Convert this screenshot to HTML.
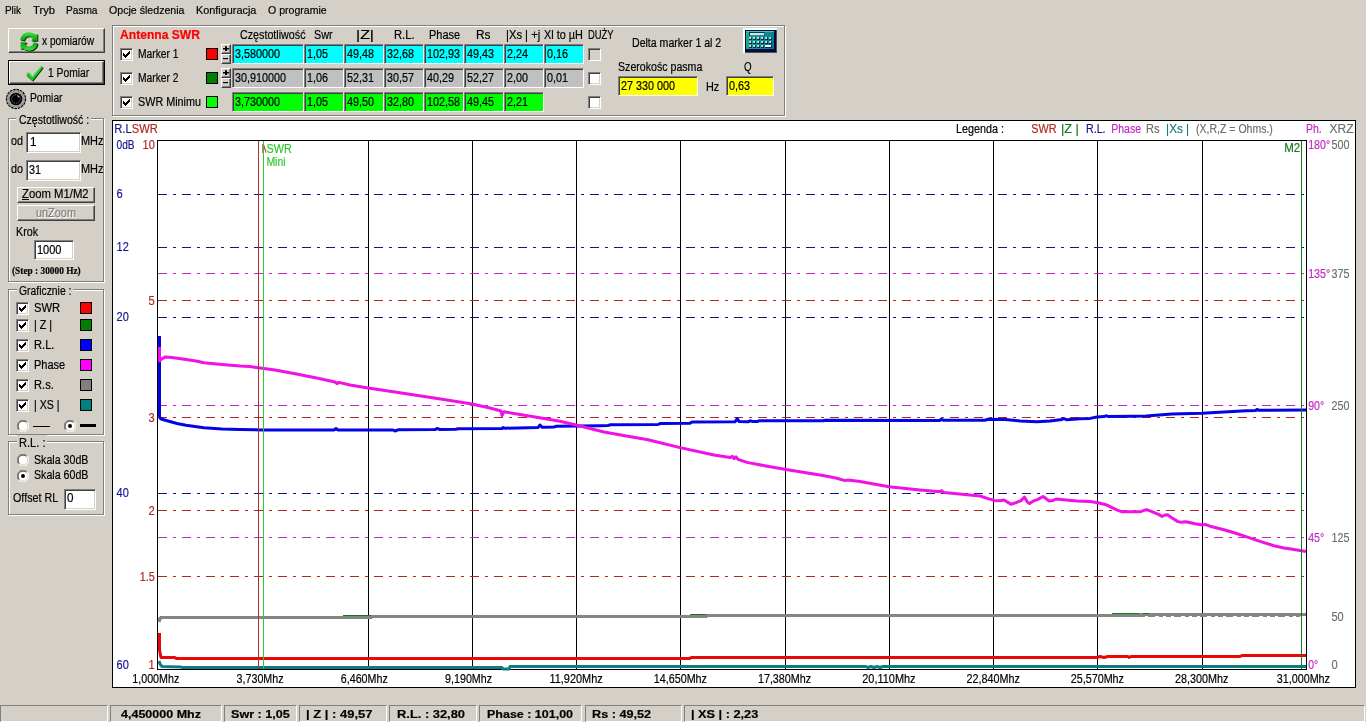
<!DOCTYPE html>
<html lang="pl"><head><meta charset="utf-8"><title>Antenna SWR</title>
<style>
html,body{margin:0;padding:0}
body{width:1366px;height:722px;overflow:hidden;background:#d4d0c8;position:relative;font-family:"Liberation Sans",sans-serif;font-size:12.5px;color:#000}
.a,.t{position:absolute}
.t{-webkit-text-stroke:.2px;white-space:nowrap;line-height:16px;height:16px;transform-origin:0 50%}
.btn{position:absolute;box-sizing:border-box;background:#d4d0c8;border:1px solid;border-color:#fff #404040 #404040 #fff;box-shadow:inset -1px -1px 0 #808080,inset 1px 1px 0 #d4d0c8}
.sunk{position:absolute;box-sizing:border-box;border:1px solid;border-color:#808080 #fff #fff #808080;box-shadow:inset 1px 1px 0 #404040,inset -1px -1px 0 #d4d0c8;background:#fff}
.fld{position:absolute;box-sizing:border-box;border:1px solid;border-color:#808080 #fff #fff #808080;box-shadow:inset 1px 1px 0 #404040}
.grp{position:absolute;box-sizing:border-box;border:1px solid #808080;box-shadow:1px 1px 0 #fff,inset 1px 1px 0 #fff}
.cap{position:absolute;background:#d4d0c8;height:14px}
.cb{position:absolute;box-sizing:border-box;width:13px;height:13px;border:1px solid;border-color:#808080 #fff #fff #808080;box-shadow:inset 1px 1px 0 #404040,inset -1px -1px 0 #d4d0c8;background:#fff}
.cb svg{position:absolute;left:2px;top:2px}
.sw{position:absolute;box-sizing:border-box;width:12px;height:12px;border:1px solid #000}
.rd{position:absolute;width:12px;height:12px}
.sp{position:absolute;box-sizing:border-box;background:#d4d0c8;border:1px solid;border-color:#fff #404040 #404040 #fff;box-shadow:inset -1px -1px 0 #808080}
.stp{position:absolute;box-sizing:border-box;top:705px;height:17px;border:1px solid;border-color:#808080 #fff #fff #808080}
#app{position:absolute;left:0;top:0;width:1366px;height:722px;will-change:transform}
svg text{stroke-width:.18px}

</style></head>
<body>
<div id="app">
<div class="a" id="menubar" style="left:0;top:0;width:1366px;height:20px">
<span class="t" style="left:5.1px;top:2.0px;font-size:11.5px;transform:scaleX(0.863);">Plik</span>
<span class="t" style="left:32.6px;top:2.0px;font-size:11.5px;transform:scaleX(0.974);">Tryb</span>
<span class="t" style="left:66.1px;top:2.0px;font-size:11.5px;transform:scaleX(0.880);">Pasma</span>
<span class="t" style="left:109.1px;top:2.0px;font-size:11.5px;transform:scaleX(0.923);">Opcje śledzenia</span>
<span class="t" style="left:196.2px;top:2.0px;font-size:11.5px;transform:scaleX(0.945);">Konfiguracja</span>
<span class="t" style="left:268.4px;top:2.0px;font-size:11.5px;transform:scaleX(0.918);">O programie</span>
</div>
<div class="btn" id="btn-xpom" style="left:8px;top:28px;width:97px;height:25px"><svg class="a" style="left:10.5px;top:2.5px" width="19" height="20" viewBox="0 0 19 20"><defs><linearGradient id="gg" x1="0" y1="0" x2="0" y2="1"><stop offset="0" stop-color="#3fe63f"/><stop offset="0.5" stop-color="#1fc01f"/><stop offset="1" stop-color="#109a14"/></linearGradient></defs><g><path d="M0.4 8.0 C0.7 3.3 4.6 0.3 8.9 0.3 C11.3 0.3 13.2 1.1 14.8 2.5 L17.4 1.7 L17.4 8.8 L11.2 8.8 L12.9 6.6 C11.9 5.0 10.4 4.4 8.9 4.4 C6.7 4.4 4.9 5.8 4.3 8.5 Z" transform="translate(0.9,0.9)" fill="#04300a"/><path d="M0.4 8.0 C0.7 3.3 4.6 0.3 8.9 0.3 C11.3 0.3 13.2 1.1 14.8 2.5 L17.4 1.7 L17.4 8.8 L11.2 8.8 L12.9 6.6 C11.9 5.0 10.4 4.4 8.9 4.4 C6.7 4.4 4.9 5.8 4.3 8.5 Z" fill="url(#gg)"/><g transform="rotate(180 9 9.5)"><path d="M0.4 8.0 C0.7 3.3 4.6 0.3 8.9 0.3 C11.3 0.3 13.2 1.1 14.8 2.5 L17.4 1.7 L17.4 8.8 L11.2 8.8 L12.9 6.6 C11.9 5.0 10.4 4.4 8.9 4.4 C6.7 4.4 4.9 5.8 4.3 8.5 Z" transform="translate(-0.9,-0.9)" fill="#04300a"/><path d="M0.4 8.0 C0.7 3.3 4.6 0.3 8.9 0.3 C11.3 0.3 13.2 1.1 14.8 2.5 L17.4 1.7 L17.4 8.8 L11.2 8.8 L12.9 6.6 C11.9 5.0 10.4 4.4 8.9 4.4 C6.7 4.4 4.9 5.8 4.3 8.5 Z" fill="url(#gg)"/></g></g></svg><span class="t" style="left:33.0px;top:3.7px;font-size:12.5px;transform:scaleX(0.814);">x pomiarów</span></div>
<div class="a" id="btn-1pom-frame" style="left:8px;top:60px;width:97px;height:25px;background:#000"><div class="btn" style="left:1px;top:1px;width:95px;height:23px"><svg class="a" style="left:15px;top:2px" width="20" height="19" viewBox="24 63 20 19"><path d="M25.8 72.2 L27.8 71.2 L31.2 75.2 L40.2 64.8 L42 66.4 L31.4 80 L25.6 74.6 Z" transform="translate(0.7,0.8)" fill="#052e0c"/><path d="M25.8 72.2 L27.8 71.2 L31.2 75.2 L40.2 64.8 L42 66.4 L31.4 80 L25.6 74.6 Z" fill="#1fc01f"/><path d="M26.6 72.4 L27.8 71.8 L31.2 76 L40.2 65.6" fill="none" stroke="#62f462" stroke-width="1"/></svg><span class="t" style="left:37.5px;top:2.6px;font-size:12.5px;transform:scaleX(0.824);">1 Pomiar</span></div></div>
<svg class="a" id="ico-pomiar" style="left:5px;top:88px" width="22" height="22" viewBox="0 0 22 22"><circle cx="11" cy="11" r="9.6" fill="#a2a2a2" stroke="#000" stroke-width="1.1" stroke-dasharray="2.6 0.9"/><circle cx="11" cy="11" r="8.2" fill="none" stroke="#3a3a3a" stroke-width="0.7" stroke-dasharray="1 4.1"/><circle cx="11" cy="11" r="6.3" fill="#000"/><circle cx="11" cy="11" r="4.3" fill="none" stroke="#8a8a8a" stroke-width="0.8" stroke-dasharray="1.6 1"/><ellipse cx="13.4" cy="8.6" rx="1.4" ry="0.6" transform="rotate(45 13.4 8.6)" fill="#c8c8c8"/></svg>
<span class="t" style="left:30.0px;top:90.4px;font-size:12.5px;transform:scaleX(0.821);">Pomiar</span>
<div class="grp" id="panel-markers" style="left:112px;top:25px;width:673px;height:91px">
<span class="t" style="left:6.6px;top:0.8px;font-size:12.5px;font-weight:bold;color:#ff0000;transform:scaleX(0.968);">Antenna SWR</span>
<span class="t" style="left:126.5px;top:0.5px;font-size:12.5px;transform:scaleX(0.857);">Częstotliwość</span>
<span class="t" style="left:200.9px;top:0.5px;font-size:12.5px;transform:scaleX(0.864);">Swr</span>
<span class="t" style="left:243.0px;top:0.5px;font-size:12.5px;transform:scaleX(1.274);">|Z|</span>
<span class="t" style="left:280.9px;top:0.5px;font-size:12.5px;transform:scaleX(0.899);">R.L.</span>
<span class="t" style="left:315.9px;top:0.5px;font-size:12.5px;transform:scaleX(0.878);">Phase</span>
<span class="t" style="left:363.0px;top:0.5px;font-size:12.5px;transform:scaleX(0.949);">Rs</span>
<span class="t" style="left:392.9px;top:0.5px;font-size:12.5px;transform:scaleX(0.897);">|Xs | +j</span>
<span class="t" style="left:431.1px;top:0.5px;font-size:12.5px;transform:scaleX(0.870);">Xl to µH</span>
<span class="t" style="left:474.9px;top:0.5px;font-size:12.5px;transform:scaleX(0.752);">DUŻY</span>
<div class="cb" style="left:7px;top:22px;background:#fff"><svg width="7" height="7" viewBox="0 0 7 7" shape-rendering="crispEdges"><path d="M0 2h1v3h-1zM1 3h1v3h-1zM2 4h1v3h-1zM3 3h1v3h-1zM4 2h1v3h-1zM5 1h1v3h-1zM6 0h1v3h-1z" fill="#000"/></svg></div>
<span class="t" style="left:25.2px;top:20.0px;font-size:12.5px;transform:scaleX(0.821);">Marker 1</span>
<div class="sw" style="left:93px;top:22px;background:#ff0000"></div>
<div class="sp" style="left:108px;top:18px;width:10px;height:10px"><svg class="a" style="left:0;top:0" width="8" height="8"><path d="M1 3h6v1.4h-6zM3 1.2h2v4.8h-2z" fill="#000"/></svg></div>
<div class="sp" style="left:108px;top:28px;width:10px;height:10px"><svg class="a" style="left:0;top:0" width="8" height="8"><path d="M1 3h5v1.2h-5z" fill="#000"/></svg></div>
<div class="fld" style="left:119px;top:18px;width:72px;height:20px;background:#00ffff"><span class="t" style="left:2.4px;top:1.0px;font-size:12.5px;transform:scaleX(0.863);">3,580000</span></div>
<div class="fld" style="left:191px;top:18px;width:40px;height:20px;background:#00ffff"><span class="t" style="left:2.4px;top:1.0px;font-size:12.5px;transform:scaleX(0.863);">1,05</span></div>
<div class="fld" style="left:231px;top:18px;width:40px;height:20px;background:#00ffff"><span class="t" style="left:2.4px;top:1.0px;font-size:12.5px;transform:scaleX(0.863);">49,48</span></div>
<div class="fld" style="left:271px;top:18px;width:40px;height:20px;background:#00ffff"><span class="t" style="left:2.4px;top:1.0px;font-size:12.5px;transform:scaleX(0.863);">32,68</span></div>
<div class="fld" style="left:311px;top:18px;width:40px;height:20px;background:#00ffff"><span class="t" style="left:2.4px;top:1.0px;font-size:12.5px;transform:scaleX(0.863);">102,93</span></div>
<div class="fld" style="left:351px;top:18px;width:40px;height:20px;background:#00ffff"><span class="t" style="left:2.4px;top:1.0px;font-size:12.5px;transform:scaleX(0.863);">49,43</span></div>
<div class="fld" style="left:391px;top:18px;width:40px;height:20px;background:#00ffff"><span class="t" style="left:2.4px;top:1.0px;font-size:12.5px;transform:scaleX(0.863);">2,24</span></div>
<div class="fld" style="left:431px;top:18px;width:40px;height:20px;background:#00ffff"><span class="t" style="left:2.4px;top:1.0px;font-size:12.5px;transform:scaleX(0.863);">0,16</span></div>
<div class="cb" style="left:475px;top:22px;background:#d4d0c8"></div>
<div class="cb" style="left:7px;top:46px;background:#fff"><svg width="7" height="7" viewBox="0 0 7 7" shape-rendering="crispEdges"><path d="M0 2h1v3h-1zM1 3h1v3h-1zM2 4h1v3h-1zM3 3h1v3h-1zM4 2h1v3h-1zM5 1h1v3h-1zM6 0h1v3h-1z" fill="#000"/></svg></div>
<span class="t" style="left:25.2px;top:44.0px;font-size:12.5px;transform:scaleX(0.821);">Marker 2</span>
<div class="sw" style="left:93px;top:46px;background:#008000"></div>
<div class="sp" style="left:108px;top:42px;width:10px;height:10px"><svg class="a" style="left:0;top:0" width="8" height="8"><path d="M1 3h6v1.4h-6zM3 1.2h2v4.8h-2z" fill="#000"/></svg></div>
<div class="sp" style="left:108px;top:52px;width:10px;height:10px"><svg class="a" style="left:0;top:0" width="8" height="8"><path d="M1 3h5v1.2h-5z" fill="#000"/></svg></div>
<div class="fld" style="left:119px;top:42px;width:72px;height:20px;background:#c0c0c0"><span class="t" style="left:2.4px;top:1.0px;font-size:12.5px;transform:scaleX(0.863);">30,910000</span></div>
<div class="fld" style="left:191px;top:42px;width:40px;height:20px;background:#c0c0c0"><span class="t" style="left:2.4px;top:1.0px;font-size:12.5px;transform:scaleX(0.863);">1,06</span></div>
<div class="fld" style="left:231px;top:42px;width:40px;height:20px;background:#c0c0c0"><span class="t" style="left:2.4px;top:1.0px;font-size:12.5px;transform:scaleX(0.863);">52,31</span></div>
<div class="fld" style="left:271px;top:42px;width:40px;height:20px;background:#c0c0c0"><span class="t" style="left:2.4px;top:1.0px;font-size:12.5px;transform:scaleX(0.863);">30,57</span></div>
<div class="fld" style="left:311px;top:42px;width:40px;height:20px;background:#c0c0c0"><span class="t" style="left:2.4px;top:1.0px;font-size:12.5px;transform:scaleX(0.863);">40,29</span></div>
<div class="fld" style="left:351px;top:42px;width:40px;height:20px;background:#c0c0c0"><span class="t" style="left:2.4px;top:1.0px;font-size:12.5px;transform:scaleX(0.863);">52,27</span></div>
<div class="fld" style="left:391px;top:42px;width:40px;height:20px;background:#c0c0c0"><span class="t" style="left:2.4px;top:1.0px;font-size:12.5px;transform:scaleX(0.863);">2,00</span></div>
<div class="fld" style="left:431px;top:42px;width:40px;height:20px;background:#c0c0c0"><span class="t" style="left:2.4px;top:1.0px;font-size:12.5px;transform:scaleX(0.863);">0,01</span></div>
<div class="cb" style="left:475px;top:46px;background:#fff"></div>
<div class="cb" style="left:7px;top:70px;background:#fff"><svg width="7" height="7" viewBox="0 0 7 7" shape-rendering="crispEdges"><path d="M0 2h1v3h-1zM1 3h1v3h-1zM2 4h1v3h-1zM3 3h1v3h-1zM4 2h1v3h-1zM5 1h1v3h-1zM6 0h1v3h-1z" fill="#000"/></svg></div>
<span class="t" style="left:25.2px;top:68.0px;font-size:12.5px;transform:scaleX(0.864);">SWR Minimu</span>
<div class="sw" style="left:93px;top:70px;background:#00ff00"></div>
<div class="fld" style="left:119px;top:66px;width:72px;height:20px;background:#00ff00"><span class="t" style="left:2.4px;top:1.0px;font-size:12.5px;transform:scaleX(0.863);">3,730000</span></div>
<div class="fld" style="left:191px;top:66px;width:40px;height:20px;background:#00ff00"><span class="t" style="left:2.4px;top:1.0px;font-size:12.5px;transform:scaleX(0.863);">1,05</span></div>
<div class="fld" style="left:231px;top:66px;width:40px;height:20px;background:#00ff00"><span class="t" style="left:2.4px;top:1.0px;font-size:12.5px;transform:scaleX(0.863);">49,50</span></div>
<div class="fld" style="left:271px;top:66px;width:40px;height:20px;background:#00ff00"><span class="t" style="left:2.4px;top:1.0px;font-size:12.5px;transform:scaleX(0.863);">32,80</span></div>
<div class="fld" style="left:311px;top:66px;width:40px;height:20px;background:#00ff00"><span class="t" style="left:2.4px;top:1.0px;font-size:12.5px;transform:scaleX(0.863);">102,58</span></div>
<div class="fld" style="left:351px;top:66px;width:40px;height:20px;background:#00ff00"><span class="t" style="left:2.4px;top:1.0px;font-size:12.5px;transform:scaleX(0.863);">49,45</span></div>
<div class="fld" style="left:391px;top:66px;width:40px;height:20px;background:#00ff00"><span class="t" style="left:2.4px;top:1.0px;font-size:12.5px;transform:scaleX(0.863);">2,21</span></div>
<div class="cb" style="left:475px;top:70px;background:#fff"></div>
<span class="t" style="left:519.2px;top:9.0px;font-size:12.5px;transform:scaleX(0.845);">Delta marker 1 al 2</span>
<span class="t" style="left:505.2px;top:33.0px;font-size:12.5px;transform:scaleX(0.849);">Szerokośc pasma</span>
<div class="fld" style="left:505px;top:50px;width:80px;height:20px;background:#ffff00"><span class="t" style="left:2.2px;top:1.0px;font-size:12.5px;transform:scaleX(0.863);">27 330 000</span></div>
<span class="t" style="left:593.4px;top:53.0px;font-size:12.5px;transform:scaleX(0.871);">Hz</span>
<span class="t" style="left:631.2px;top:33.0px;font-size:12.5px;transform:scaleX(0.782);">Q</span>
<div class="fld" style="left:613px;top:50px;width:48px;height:20px;background:#ffff00"><span class="t" style="left:2.4px;top:1.0px;font-size:12.5px;transform:scaleX(0.863);">0,63</span></div>
<div class="a" id="btn-calc" style="left:630px;top:2px;width:34px;height:25px"><svg class="a" style="left:0;top:0" width="34" height="25" viewBox="743 28 34 25"><defs><linearGradient id="tg" x1="0" y1="0" x2="1" y2="0.4"><stop offset="0" stop-color="#22b090"/><stop offset="0.5" stop-color="#159a94"/><stop offset="1" stop-color="#0e7890"/></linearGradient></defs><rect x="743" y="28" width="34" height="25" fill="#fff"/><rect x="745" y="30" width="32" height="23" fill="#505050"/><rect x="745" y="30" width="31" height="22" fill="#08083a"/><rect x="746" y="31" width="28" height="18" fill="url(#tg)"/><rect x="746" y="31" width="28" height="1" fill="#58ccc0" opacity="0.8"/><rect x="749" y="32" width="15.5" height="4" fill="#0a3a4a"/><rect x="750" y="33" width="14" height="2.4" fill="#b4f2f2"/><rect x="749" y="37" width="3" height="3" fill="#062a40"/><rect x="749.2" y="37" width="1.9" height="1.9" fill="#c8fafa"/><rect x="753" y="37" width="3" height="3" fill="#062a40"/><rect x="753.2" y="37" width="1.9" height="1.9" fill="#c8fafa"/><rect x="757" y="37" width="3" height="3" fill="#062a40"/><rect x="757.2" y="37" width="1.9" height="1.9" fill="#c8fafa"/><rect x="761" y="37" width="3" height="3" fill="#062a40"/><rect x="761.2" y="37" width="1.9" height="1.9" fill="#c8fafa"/><rect x="765" y="37" width="3" height="3" fill="#062a40"/><rect x="765.2" y="37" width="1.9" height="1.9" fill="#c8fafa"/><rect x="769" y="37" width="3" height="3" fill="#062a40"/><rect x="769.2" y="37" width="1.9" height="1.9" fill="#c8fafa"/><rect x="749" y="41" width="3" height="3" fill="#062a40"/><rect x="749.2" y="41" width="1.9" height="1.9" fill="#c8fafa"/><rect x="753" y="41" width="3" height="3" fill="#062a40"/><rect x="753.2" y="41" width="1.9" height="1.9" fill="#c8fafa"/><rect x="757" y="41" width="3" height="3" fill="#062a40"/><rect x="757.2" y="41" width="1.9" height="1.9" fill="#c8fafa"/><rect x="761" y="41" width="3" height="3" fill="#062a40"/><rect x="761.2" y="41" width="1.9" height="1.9" fill="#c8fafa"/><rect x="765" y="41" width="3" height="3" fill="#062a40"/><rect x="765.2" y="41" width="1.9" height="1.9" fill="#c8fafa"/><rect x="769" y="41" width="3" height="3" fill="#062a40"/><rect x="769.2" y="41" width="1.9" height="1.9" fill="#c8fafa"/><rect x="749" y="45" width="3" height="3" fill="#062a40"/><rect x="749.2" y="45" width="1.9" height="1.9" fill="#c8fafa"/><rect x="753" y="45" width="3" height="3" fill="#062a40"/><rect x="753.2" y="45" width="1.9" height="1.9" fill="#c8fafa"/><rect x="757" y="45" width="3" height="3" fill="#062a40"/><rect x="757.2" y="45" width="1.9" height="1.9" fill="#c8fafa"/><rect x="761" y="45" width="3" height="3" fill="#062a40"/><rect x="761.2" y="45" width="1.9" height="1.9" fill="#c8fafa"/><rect x="765" y="45" width="7" height="3" fill="#062a40"/><rect x="765" y="45" width="6" height="2" fill="#f2ffff"/></svg></div>
</div>
<div class="grp" id="grp-freq" style="left:8px;top:118px;width:96px;height:164px"></div><div class="cap" style="left:16.4px;top:112px;width:74.2px"></div><span class="t" style="left:18.9px;top:112.0px;font-size:12.5px;transform:scaleX(0.842);">Częstotliwość :</span>
<span class="t" style="left:10.5px;top:133.0px;font-size:12.5px;transform:scaleX(0.863);">od</span>
<div class="sunk" style="left:26px;top:132px;width:55px;height:21px"><span class="t" style="left:2.5px;top:1.0px;font-size:12.5px;transform:scaleX(0.935);">1</span></div>
<span class="t" style="left:81.4px;top:133.0px;font-size:12.5px;transform:scaleX(0.876);">MHz</span>
<span class="t" style="left:10.5px;top:161.0px;font-size:12.5px;transform:scaleX(0.863);">do</span>
<div class="sunk" style="left:26px;top:160px;width:55px;height:21px"><span class="t" style="left:2.1px;top:1.0px;font-size:12.5px;transform:scaleX(0.863);">31</span></div>
<span class="t" style="left:81.4px;top:161.0px;font-size:12.5px;transform:scaleX(0.876);">MHz</span>
<div class="btn" id="btn-zoom" style="left:17px;top:187px;width:78px;height:16px"><span class="t" style="left:3.9px;top:-1.7px;font-size:12.5px;transform:scaleX(0.905);"><u>Z</u>oom M1/M2</span></div>
<div class="btn" id="btn-unzoom" style="left:17px;top:205px;width:78px;height:16px"><span class="t" style="left:18.1px;top:-1.1px;font-size:12.5px;color:#808080;transform:scaleX(0.872);text-shadow:1px 1px 0 #fff;">unZoom</span></div>
<span class="t" style="left:16.2px;top:223.6px;font-size:12.5px;transform:scaleX(0.856);">Krok</span>
<div class="sunk" style="left:34px;top:240px;width:40px;height:20px"><span class="t" style="left:2.4px;top:0.6px;font-size:12.5px;transform:scaleX(0.881);">1000</span></div>
<span class="t" style="left:12.2px;top:262.5px;font-size:10.5px;font-family:'Liberation Serif',serif;font-weight:bold;transform:scaleX(0.888);">(Step : 30000 Hz)</span>
<div class="grp" id="grp-graf" style="left:8px;top:289px;width:96px;height:146px"></div><div class="cap" style="left:16.6px;top:283px;width:56.4px"></div><span class="t" style="left:19.1px;top:282.6px;font-size:12.5px;transform:scaleX(0.829);">Graficznie :</span>
<div class="cb" style="left:16px;top:302px;background:#fff"><svg width="7" height="7" viewBox="0 0 7 7" shape-rendering="crispEdges"><path d="M0 2h1v3h-1zM1 3h1v3h-1zM2 4h1v3h-1zM3 3h1v3h-1zM4 2h1v3h-1zM5 1h1v3h-1zM6 0h1v3h-1z" fill="#000"/></svg></div>
<span class="t" style="left:34.0px;top:300.0px;font-size:12.5px;transform:scaleX(0.898);">SWR</span>
<div class="sw" style="left:80px;top:302px;background:#ff0000"></div>
<div class="cb" style="left:16px;top:319px;background:#fff"><svg width="7" height="7" viewBox="0 0 7 7" shape-rendering="crispEdges"><path d="M0 2h1v3h-1zM1 3h1v3h-1zM2 4h1v3h-1zM3 3h1v3h-1zM4 2h1v3h-1zM5 1h1v3h-1zM6 0h1v3h-1z" fill="#000"/></svg></div>
<span class="t" style="left:34.0px;top:317.0px;font-size:12.5px;transform:scaleX(0.859);">| Z |</span>
<div class="sw" style="left:80px;top:319px;background:#008000"></div>
<div class="cb" style="left:16px;top:339px;background:#fff"><svg width="7" height="7" viewBox="0 0 7 7" shape-rendering="crispEdges"><path d="M0 2h1v3h-1zM1 3h1v3h-1zM2 4h1v3h-1zM3 3h1v3h-1zM4 2h1v3h-1zM5 1h1v3h-1zM6 0h1v3h-1z" fill="#000"/></svg></div>
<span class="t" style="left:34.0px;top:337.0px;font-size:12.5px;transform:scaleX(0.890);">R.L.</span>
<div class="sw" style="left:80px;top:339px;background:#0000ff"></div>
<div class="cb" style="left:16px;top:359px;background:#fff"><svg width="7" height="7" viewBox="0 0 7 7" shape-rendering="crispEdges"><path d="M0 2h1v3h-1zM1 3h1v3h-1zM2 4h1v3h-1zM3 3h1v3h-1zM4 2h1v3h-1zM5 1h1v3h-1zM6 0h1v3h-1z" fill="#000"/></svg></div>
<span class="t" style="left:34.0px;top:357.0px;font-size:12.5px;transform:scaleX(0.878);">Phase</span>
<div class="sw" style="left:80px;top:359px;background:#ff00ff"></div>
<div class="cb" style="left:16px;top:379px;background:#fff"><svg width="7" height="7" viewBox="0 0 7 7" shape-rendering="crispEdges"><path d="M0 2h1v3h-1zM1 3h1v3h-1zM2 4h1v3h-1zM3 3h1v3h-1zM4 2h1v3h-1zM5 1h1v3h-1zM6 0h1v3h-1z" fill="#000"/></svg></div>
<span class="t" style="left:34.0px;top:377.0px;font-size:12.5px;transform:scaleX(0.891);">R.s.</span>
<div class="sw" style="left:80px;top:379px;background:#808080"></div>
<div class="cb" style="left:16px;top:399px;background:#fff"><svg width="7" height="7" viewBox="0 0 7 7" shape-rendering="crispEdges"><path d="M0 2h1v3h-1zM1 3h1v3h-1zM2 4h1v3h-1zM3 3h1v3h-1zM4 2h1v3h-1zM5 1h1v3h-1zM6 0h1v3h-1z" fill="#000"/></svg></div>
<span class="t" style="left:34.0px;top:397.0px;font-size:12.5px;transform:scaleX(0.847);">| XS |</span>
<div class="sw" style="left:80px;top:399px;background:#008080"></div>
<svg class="rd" style="left:17px;top:420px" width="12" height="12" viewBox="0 0 12 12"><circle cx="6" cy="6" r="5.5" fill="#fff"/><path d="M10.2 1.8 A5.9 5.9 0 0 0 1.8 10.2" fill="none" stroke="#808080" stroke-width="1"/><path d="M9.5 2.5 A4.9 4.9 0 0 0 2.5 9.5" fill="none" stroke="#404040" stroke-width="1"/><path d="M1.8 10.2 A5.9 5.9 0 0 0 10.2 1.8" fill="none" stroke="#fff" stroke-width="1"/><path d="M2.5 9.5 A4.9 4.9 0 0 0 9.5 2.5" fill="none" stroke="#d4d0c8" stroke-width="1"/></svg>
<div class="a" style="left:33px;top:426px;width:17px;height:1px;background:#000"></div>
<svg class="rd" style="left:64px;top:420px" width="12" height="12" viewBox="0 0 12 12"><circle cx="6" cy="6" r="5.5" fill="#fff"/><path d="M10.2 1.8 A5.9 5.9 0 0 0 1.8 10.2" fill="none" stroke="#808080" stroke-width="1"/><path d="M9.5 2.5 A4.9 4.9 0 0 0 2.5 9.5" fill="none" stroke="#404040" stroke-width="1"/><path d="M1.8 10.2 A5.9 5.9 0 0 0 10.2 1.8" fill="none" stroke="#fff" stroke-width="1"/><path d="M2.5 9.5 A4.9 4.9 0 0 0 9.5 2.5" fill="none" stroke="#d4d0c8" stroke-width="1"/><circle cx="6" cy="6" r="2" fill="#000"/></svg>
<div class="a" style="left:80px;top:424.3px;width:16px;height:2.6px;background:#000"></div>
<div class="grp" id="grp-rl" style="left:8px;top:441px;width:96px;height:74px"></div><div class="cap" style="left:16.5px;top:435px;width:30.5px"></div><span class="t" style="left:19.0px;top:435.0px;font-size:12.5px;transform:scaleX(0.887);">R.L. :</span>
<svg class="rd" style="left:17px;top:454px" width="12" height="12" viewBox="0 0 12 12"><circle cx="6" cy="6" r="5.5" fill="#fff"/><path d="M10.2 1.8 A5.9 5.9 0 0 0 1.8 10.2" fill="none" stroke="#808080" stroke-width="1"/><path d="M9.5 2.5 A4.9 4.9 0 0 0 2.5 9.5" fill="none" stroke="#404040" stroke-width="1"/><path d="M1.8 10.2 A5.9 5.9 0 0 0 10.2 1.8" fill="none" stroke="#fff" stroke-width="1"/><path d="M2.5 9.5 A4.9 4.9 0 0 0 9.5 2.5" fill="none" stroke="#d4d0c8" stroke-width="1"/></svg>
<span class="t" style="left:34.3px;top:451.7px;font-size:12.5px;transform:scaleX(0.852);">Skala 30dB</span>
<svg class="rd" style="left:17px;top:470px" width="12" height="12" viewBox="0 0 12 12"><circle cx="6" cy="6" r="5.5" fill="#fff"/><path d="M10.2 1.8 A5.9 5.9 0 0 0 1.8 10.2" fill="none" stroke="#808080" stroke-width="1"/><path d="M9.5 2.5 A4.9 4.9 0 0 0 2.5 9.5" fill="none" stroke="#404040" stroke-width="1"/><path d="M1.8 10.2 A5.9 5.9 0 0 0 10.2 1.8" fill="none" stroke="#fff" stroke-width="1"/><path d="M2.5 9.5 A4.9 4.9 0 0 0 9.5 2.5" fill="none" stroke="#d4d0c8" stroke-width="1"/><circle cx="6" cy="6" r="2" fill="#000"/></svg>
<span class="t" style="left:34.3px;top:467.4px;font-size:12.5px;transform:scaleX(0.852);">Skala 60dB</span>
<span class="t" style="left:13.3px;top:490.0px;font-size:12.5px;transform:scaleX(0.860);">Offset RL</span>
<div class="sunk" style="left:64px;top:489px;width:32px;height:21px"><span class="t" style="left:2.3px;top:0.4px;font-size:12.5px;transform:scaleX(0.935);">0</span></div>
<svg class="a" id="chart" style="left:112px;top:120px" width="1244" height="568" viewBox="112 120 1244 568" font-family="Liberation Sans, sans-serif" font-size="12.5">
<rect x="112.5" y="120.5" width="1243" height="567" fill="#fff" stroke="#000" shape-rendering="crispEdges"/>
<g shape-rendering="crispEdges" fill="none">
<path d="M368.5 141V669M472.5 141V669M576.5 141V669M680.5 141V669M785.5 141V669M889.5 141V669M993.5 141V669M1097.5 141V669M1202.5 141V669" stroke="#000" stroke-width="1"/>
<path d="M158 194.5H1306M158 247.5H1306M158 317.5H1306M158 493.5H1306" stroke="#141494" stroke-width="1" stroke-dasharray="9 6 3 6"/>
<path d="M158 273.5H1306M158 405.5H1306M158 537.5H1306" stroke="#c428c4" stroke-width="1" stroke-dasharray="9 6 3 6"/>
<path d="M158 300.5H1306M158 417.5H1306M158 510.5H1306M158 576.5H1306" stroke="#ae2820" stroke-width="1" stroke-dasharray="9 6 3 6"/>
<rect x="157.5" y="140.5" width="1149" height="529" stroke="#000"/>
</g>
<text transform="translate(261.4 153) scale(0.893 1)" fill="#a03818" stroke="#a03818">M1</text>
<rect x="266.2" y="142" width="29" height="26" fill="#fff"/>
<text transform="translate(266.4 153) scale(0.871 1)" fill="#30c830" stroke="#30c830">SWR</text>
<text transform="translate(266.4 166) scale(0.838 1)" fill="#30c830" stroke="#30c830">Mini</text>
<text transform="translate(1284.2 152.4) scale(0.921 1)" fill="#157a1e" stroke="#157a1e">M2</text>
<text transform="translate(114.2 133) scale(0.900 1)" fill="#141494" stroke="#141494">R.L</text>
<text transform="translate(131.8 133) scale(0.892 1)" fill="#ae2820" stroke="#ae2820">SWR</text>
<text transform="translate(956.0 133) scale(0.865 1)" fill="#000" stroke="#000">Legenda :</text>
<text transform="translate(1031.2 133) scale(0.868 1)" fill="#ae2820" stroke="#ae2820">SWR</text>
<text transform="translate(1061.0 133) scale(1.017 1)" fill="#157a1e" stroke="#157a1e">|Z |</text>
<text transform="translate(1086.0 133) scale(0.851 1)" fill="#141494" stroke="#141494">R.L.</text>
<text transform="translate(1111.2 133) scale(0.846 1)" fill="#c428c4" stroke="#c428c4">Phase</text>
<text transform="translate(1146.0 133) scale(0.884 1)" fill="#6e6e6e" stroke="#6e6e6e">Rs</text>
<text transform="translate(1166.1 133) scale(0.933 1)" fill="#0c7c84" stroke="#0c7c84">|Xs |</text>
<text transform="translate(1196.1 133) scale(0.841 1)" fill="#6e6e6e" stroke="#6e6e6e">(X,R,Z = Ohms.)</text>
<text transform="translate(1305.9 133) scale(0.842 1)" fill="#c428c4" stroke="#c428c4">Ph.</text>
<text transform="translate(1329.5 133) scale(0.960 1)" fill="#6e6e6e" stroke="#6e6e6e">XRZ</text>
<text transform="translate(116.6 149) scale(0.809 1)" fill="#141494" stroke="#141494">0dB</text>
<text transform="translate(116.6 198) scale(0.892 1)" fill="#141494" stroke="#141494">6</text>
<text transform="translate(116.6 251) scale(0.878 1)" fill="#141494" stroke="#141494">12</text>
<text transform="translate(116.6 321) scale(0.878 1)" fill="#141494" stroke="#141494">20</text>
<text transform="translate(116.6 497) scale(0.878 1)" fill="#141494" stroke="#141494">40</text>
<text transform="translate(116.6 669) scale(0.878 1)" fill="#141494" stroke="#141494">60</text>
<text transform="translate(142.6 149) scale(0.878 1)" fill="#ae2820" stroke="#ae2820">10</text>
<text transform="translate(148.6 305) scale(0.892 1)" fill="#ae2820" stroke="#ae2820">5</text>
<text transform="translate(148.6 422) scale(0.892 1)" fill="#ae2820" stroke="#ae2820">3</text>
<text transform="translate(148.6 515) scale(0.892 1)" fill="#ae2820" stroke="#ae2820">2</text>
<text transform="translate(139.8 581) scale(0.863 1)" fill="#ae2820" stroke="#ae2820">1.5</text>
<text transform="translate(148.6 669) scale(0.892 1)" fill="#ae2820" stroke="#ae2820">1</text>
<text transform="translate(1308.2 149) scale(0.851 1)" fill="#c428c4" stroke="#c428c4">180°</text>
<text transform="translate(1308.2 278) scale(0.851 1)" fill="#c428c4" stroke="#c428c4">135°</text>
<text transform="translate(1308.2 410) scale(0.847 1)" fill="#c428c4" stroke="#c428c4">90°</text>
<text transform="translate(1308.2 542) scale(0.847 1)" fill="#c428c4" stroke="#c428c4">45°</text>
<text transform="translate(1308.2 669) scale(0.837 1)" fill="#c428c4" stroke="#c428c4">0°</text>
<text transform="translate(1331.5 149) scale(0.863 1)" fill="#6e6e6e" stroke="#6e6e6e">500</text>
<text transform="translate(1331.5 278) scale(0.863 1)" fill="#6e6e6e" stroke="#6e6e6e">375</text>
<text transform="translate(1331.5 410) scale(0.863 1)" fill="#6e6e6e" stroke="#6e6e6e">250</text>
<text transform="translate(1331.5 542) scale(0.863 1)" fill="#6e6e6e" stroke="#6e6e6e">125</text>
<text transform="translate(1331.5 621) scale(0.878 1)" fill="#6e6e6e" stroke="#6e6e6e">50</text>
<text transform="translate(1331.5 669) scale(0.892 1)" fill="#6e6e6e" stroke="#6e6e6e">0</text>
<text transform="translate(132.3 683) scale(0.856 1)" fill="#000" stroke="#000">1,000Mhz</text>
<text transform="translate(236.6 683) scale(0.856 1)" fill="#000" stroke="#000">3,730Mhz</text>
<text transform="translate(340.8 683) scale(0.856 1)" fill="#000" stroke="#000">6,460Mhz</text>
<text transform="translate(445.1 683) scale(0.856 1)" fill="#000" stroke="#000">9,190Mhz</text>
<text transform="translate(549.4 683) scale(0.877 1)" fill="#000" stroke="#000">11,920Mhz</text>
<text transform="translate(653.7 683) scale(0.863 1)" fill="#000" stroke="#000">14,650Mhz</text>
<text transform="translate(757.9 683) scale(0.863 1)" fill="#000" stroke="#000">17,380Mhz</text>
<text transform="translate(862.2 683) scale(0.877 1)" fill="#000" stroke="#000">20,110Mhz</text>
<text transform="translate(966.5 683) scale(0.863 1)" fill="#000" stroke="#000">22,840Mhz</text>
<text transform="translate(1070.7 683) scale(0.863 1)" fill="#000" stroke="#000">25,570Mhz</text>
<text transform="translate(1175.0 683) scale(0.863 1)" fill="#000" stroke="#000">28,300Mhz</text>
<text transform="translate(1276.7 683) scale(0.863 1)" fill="#000" stroke="#000">31,000Mhz</text>
<polyline points="159.0,620.0 161.0,617.5 371.0,617.5 372.0,616.5 706.0,616.5 707.0,615.5 1139.0,615.5 1140.0,614.5 1306.0,614.5" fill="none" stroke="#0f7a1a" stroke-width="3" stroke-linejoin="round" stroke-linecap="butt"/>
<polyline points="159.0,622.0 160.0,618.5 162.0,617.5 371.0,617.5 372.0,616.5 706.0,616.5 707.0,615.5 1139.0,615.5 1140.0,614.5 1306.0,614.5" fill="none" stroke="#858585" stroke-width="3" stroke-linejoin="round" stroke-linecap="butt"/>
<path d="M1140 616.5H1300" stroke="#858585" stroke-width="1" stroke-dasharray="5 3 7 4 4 3" fill="none" shape-rendering="crispEdges"/>
<path d="M343 615.5H371M690 614.5H706M1112 613.5H1139M1143 613.5H1149" stroke="#0f7a1a" stroke-width="1" fill="none" shape-rendering="crispEdges"/>
<polyline points="159.0,661.0 160.0,664.0 162.0,666.5 181.0,667.0 182.0,667.5 502.0,667.5 503.0,669.0 509.0,669.0 510.0,666.5 866.0,666.5 868.0,667.5 871.0,666.5 874.0,667.5 877.0,666.5 880.0,667.5 883.0,666.5 1306.0,666.5" fill="none" stroke="#0d7d84" stroke-width="3" stroke-linejoin="round" stroke-linecap="butt"/>
<polyline points="159.5,633.0 159.5,650.0 161.0,657.5 175.0,657.5 176.0,658.5 690.0,658.5 691.0,657.5 1097.0,657.5 1100.0,656.5 1104.0,657.5 1108.0,656.5 1128.0,656.5 1129.0,657.5 1131.0,656.5 1240.0,656.5 1242.0,655.5 1306.0,655.5" fill="none" stroke="#e80808" stroke-width="3" stroke-linejoin="round" stroke-linecap="butt"/>
<polyline points="159.5,336.0 159.5,417.0 161.0,419.0 168.0,421.0 177.0,423.5 186.0,425.3 204.0,427.8 222.0,429.0 240.0,429.5 262.0,430.0 300.0,430.0 334.0,430.0 336.0,428.5 338.0,430.0 393.0,430.0 395.0,431.0 398.0,429.8 435.0,429.6 437.0,428.5 440.0,429.5 456.0,429.3 458.0,428.7 502.0,428.6 503.0,427.6 505.0,428.2 538.0,427.6 540.0,425.0 542.0,427.2 554.0,427.0 556.0,426.3 600.0,425.7 608.0,425.5 610.0,424.8 658.0,424.5 660.0,423.6 690.0,423.3 692.0,422.0 735.0,421.8 737.3,418.6 739.0,421.6 748.0,421.8 750.0,420.8 753.0,421.6 757.0,421.6 759.0,420.8 823.0,420.8 825.0,420.2 940.0,420.4 941.0,419.2 943.0,420.2 985.0,420.2 988.0,419.3 1005.0,419.4 1020.0,421.0 1037.0,421.8 1050.0,421.0 1062.0,419.4 1064.0,418.6 1067.0,419.8 1080.0,418.8 1090.0,418.4 1097.0,417.0 1104.0,416.6 1106.0,415.8 1109.0,416.6 1130.0,416.2 1146.0,416.0 1172.0,414.0 1202.0,413.3 1246.0,410.8 1256.0,410.4 1257.0,409.4 1259.0,410.3 1306.0,410.0" fill="none" stroke="#0404e4" stroke-width="3" stroke-linejoin="round" stroke-linecap="butt"/>
<polyline points="159.5,347.0 159.5,361.0 161.0,359.5 165.0,357.0 172.0,357.5 186.0,359.6 196.0,361.0 204.0,362.7 222.0,364.4 240.0,366.0 250.0,366.6 262.0,368.3 275.0,370.0 294.0,373.5 319.0,378.5 335.0,382.0 337.0,383.6 339.0,382.4 350.0,385.0 368.0,388.0 395.0,392.0 421.0,396.0 447.0,400.0 472.0,404.0 490.0,408.0 501.0,411.0 502.0,415.5 504.0,411.8 520.0,414.5 541.0,418.0 560.0,421.3 576.0,425.0 604.0,432.0 625.0,435.8 648.0,439.7 680.0,447.6 714.0,455.0 730.0,457.6 732.5,456.2 734.0,458.6 736.0,456.8 738.0,459.4 747.0,462.4 766.0,466.0 786.0,469.6 823.0,475.5 836.0,478.0 845.0,480.6 848.0,480.0 860.0,481.6 889.0,486.7 920.0,490.0 940.0,491.7 941.5,490.6 944.0,492.6 980.0,496.0 988.0,498.6 994.0,500.4 1000.0,500.8 1004.0,500.0 1008.0,502.4 1011.0,504.2 1016.0,502.6 1021.0,500.6 1024.5,497.2 1027.0,501.6 1029.5,503.6 1033.0,501.2 1038.0,499.4 1043.0,496.5 1046.0,498.6 1049.0,501.0 1053.0,500.4 1056.0,499.0 1066.0,500.0 1077.0,501.0 1090.0,501.6 1098.0,502.8 1106.0,504.7 1112.0,507.6 1118.0,510.4 1122.0,511.8 1140.0,511.8 1144.0,510.4 1146.5,509.7 1152.0,511.6 1159.0,514.6 1162.0,516.4 1165.0,515.0 1167.5,514.8 1172.0,518.0 1178.0,521.6 1181.0,522.2 1186.0,521.8 1195.0,523.8 1202.5,525.0 1205.0,524.4 1212.0,526.8 1224.0,529.7 1235.0,533.0 1246.0,536.6 1260.0,541.4 1274.0,545.7 1284.0,548.0 1291.0,549.0 1306.0,551.5" fill="none" stroke="#f012e4" stroke-width="3" stroke-linejoin="round" stroke-linecap="butt"/>
<g shape-rendering="crispEdges" fill="none"><path d="M258.5 141V669" stroke="#b42c2c"/><path d="M263.5 141V669" stroke="#2ccc2c"/><path d="M1301.5 141V669" stroke="#157a1e"/></g>
</svg>
<div class="a" id="statusbar" style="left:0;top:703px;width:1366px;height:19px"></div>
<div class="stp" style="left:0px;width:108px"></div>
<div class="stp" style="left:110px;width:112px"><span class="t" style="left:9.5px;top:-0.5px;font-size:11.5px;font-weight:bold;transform:scaleX(1.088);">4,450000 Mhz</span></div>
<div class="stp" style="left:224px;width:73px"><span class="t" style="left:6.2px;top:-0.5px;font-size:11.5px;font-weight:bold;transform:scaleX(1.095);">Swr : 1,05</span></div>
<div class="stp" style="left:299px;width:88px"><span class="t" style="left:6.0px;top:-0.5px;font-size:11.5px;font-weight:bold;transform:scaleX(1.130);">| Z | : 49,57</span></div>
<div class="stp" style="left:389px;width:88px"><span class="t" style="left:6.5px;top:-0.5px;font-size:11.5px;font-weight:bold;transform:scaleX(1.120);">R.L. : 32,80</span></div>
<div class="stp" style="left:479px;width:103px"><span class="t" style="left:6.5px;top:-0.5px;font-size:11.5px;font-weight:bold;transform:scaleX(1.085);">Phase : 101,00</span></div>
<div class="stp" style="left:585px;width:97px"><span class="t" style="left:5.5px;top:-0.5px;font-size:11.5px;font-weight:bold;transform:scaleX(1.099);">Rs : 49,52</span></div>
<div class="stp" style="left:684px;width:681px"><span class="t" style="left:6.3px;top:-0.5px;font-size:11.5px;font-weight:bold;transform:scaleX(1.106);">| XS | : 2,23</span></div>
</div>
</body></html>
